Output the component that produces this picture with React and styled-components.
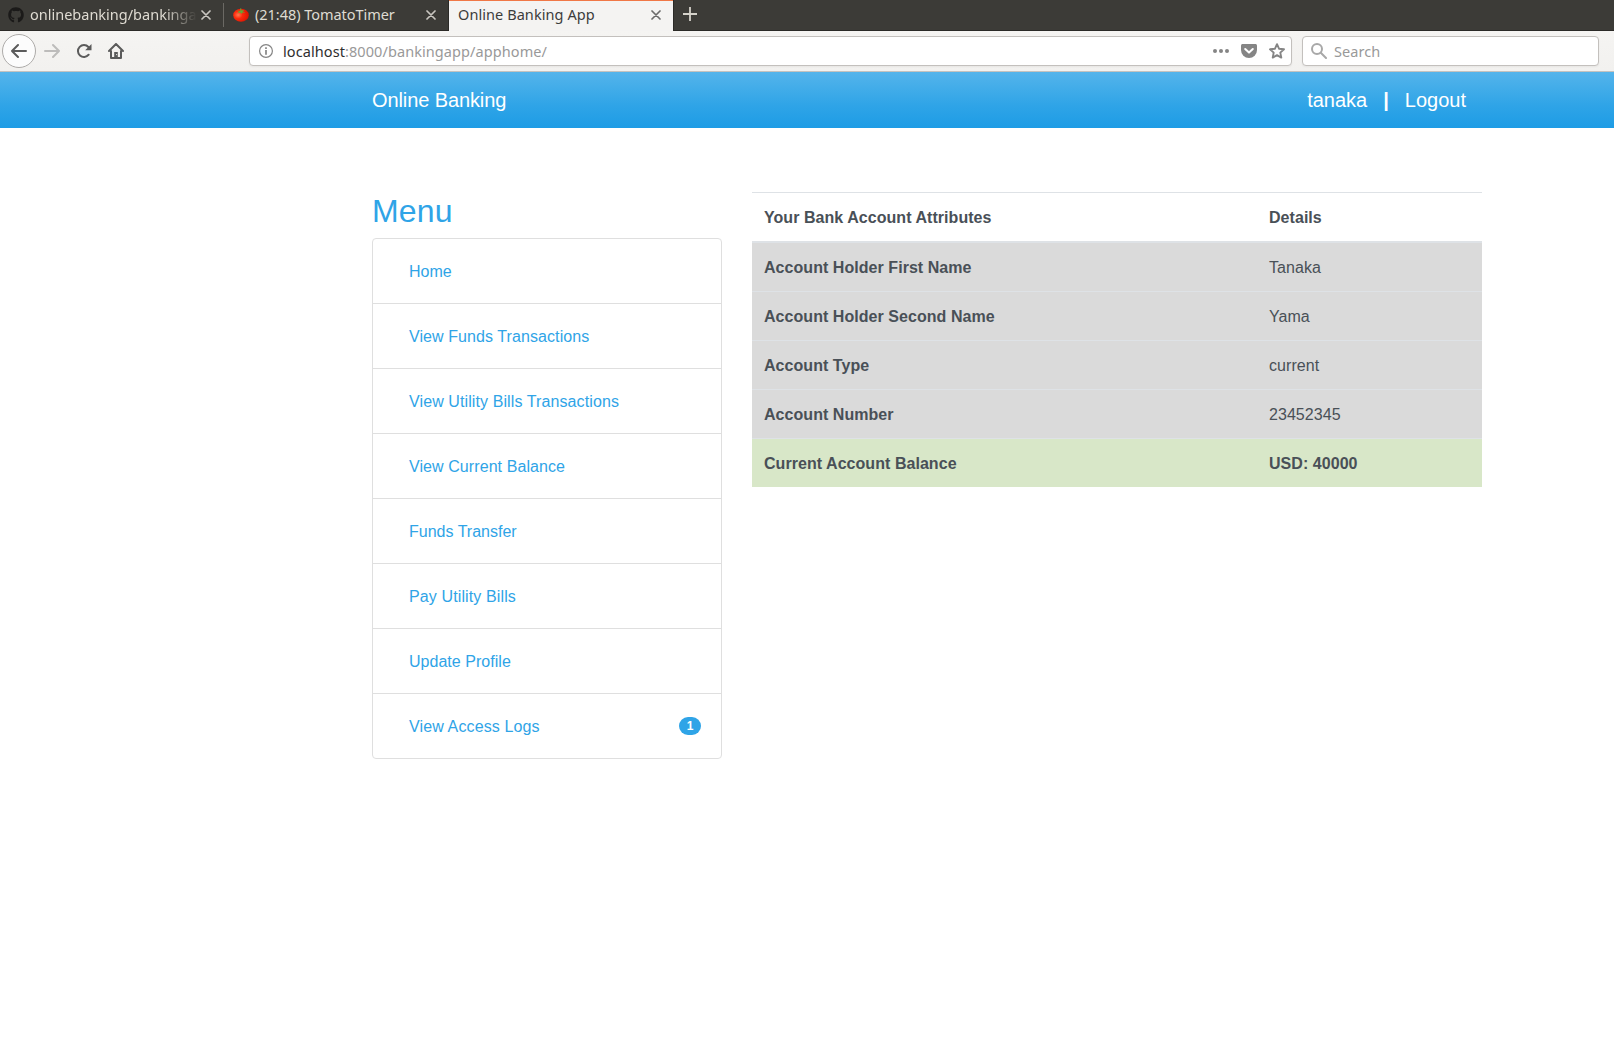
import React from "react";
import styled, { createGlobalStyle } from "styled-components";
import { FaGithub } from "react-icons/fa";

const GlobalStyle = createGlobalStyle`
  * { box-sizing: border-box; }
  body {
    margin: 0;
    background: #fff;
    color: #495057;
    font: 16px/24px "Liberation Sans", Arial, sans-serif;
  }
`;

const chromeFont = `"Noto Sans", "Open Sans", sans-serif`;

const TabBar = styled.div`
  display: flex;
  height: 31px;
  background: #3c3b37;
  border-bottom: 1px solid #2b2a27;
  font: 14.5px/28px ${chromeFont};
`;

const Tab = styled.div`
  display: flex;
  align-items: center;
  flex: none;
  width: ${(p) => p.$width}px;
  height: ${(p) => (p.$active ? 31 : 30)}px;
  padding: 0 ${(p) => p.$padRight}px 0 ${(p) => p.$padLeft}px;
  background: ${(p) => (p.$active ? "#f4f3f2" : "transparent")};
  color: ${(p) => (p.$active ? "#3c3c3c" : "#dfdbd2")};
  box-shadow: ${(p) => (p.$active ? "inset 0 1px #f07746, -1px 0 #2b2a27, 1px 0 #2b2a27" : "none")};
  padding-bottom: ${(p) => (p.$active ? 1 : 0)}px;
  svg { flex: none; display: block; }
`;

const TabTitle = styled.div`
  flex: 1;
  min-width: 0;
  height: 30px;
  margin-left: ${(p) => p.$gap || 0}px;
  white-space: nowrap;
  letter-spacing: ${(p) => p.$tracking || 0}px;
  mask-image: ${(p) => (p.$fade ? "linear-gradient(90deg, #000 134px, transparent 167px)" : "none")};
`;

const TabDivider = styled.div`
  width: 1px;
  height: 24px;
  margin-top: 3px;
  background: #6b6964;
`;

const NewTab = styled.div`
  display: flex;
  align-items: center;
  height: 28px;
  margin-left: 10px;
`;

const Toolbar = styled.div`
  display: flex;
  align-items: center;
  height: 41px;
  padding: 0 15px 0 2px;
  background: linear-gradient(#f5f4f2, #f2f1ef);
  border-bottom: 1px solid #c4c2bf;
  font: 14.5px/28px ${chromeFont};
  svg { flex: none; display: block; }
`;

const BackButton = styled.div`
  display: grid;
  place-items: center;
  width: 34px;
  height: 34px;
  border: 1px solid #adaba9;
  border-radius: 50%;
  background: #fcfcfc;
`;

const NavIcons = styled.div`
  display: flex;
  gap: 16px;
  margin-left: 8px;
  width: 205px;
`;

const Field = styled.div`
  display: flex;
  align-items: center;
  width: ${(p) => p.$width}px;
  height: 30px;
  margin-right: ${(p) => p.$after || 0}px;
  padding: 0 6px 0 ${(p) => p.$pad}px;
  border: 1px solid #c3c0bd;
  border-radius: 4px;
  background: #fff;
  color: #999;
  box-shadow: 0 1px 2px rgba(0, 0, 0, 0.05);
`;

const Address = styled.div`
  flex: 1;
  margin-left: ${(p) => p.$gap}px;
  letter-spacing: 0.08px;
  b { font-weight: 400; color: #2e2e2e; }
`;

const FieldActions = styled.div`
  display: flex;
  gap: 12px;
`;

const Header = styled.header`
  height: 56px;
  background: linear-gradient(#54b4eb, #2fa4e7 60%, #1d9ce5);
  color: #fff;
  font-size: 20px;
  line-height: 30px;
`;

const Container = styled.div`
  display: flex;
  width: 1110px;
  margin-left: 372px;
`;

const HeaderInner = styled(Container)`
  align-items: center;
  justify-content: space-between;
  height: 56px;
`;

const Brand = styled.span`
  letter-spacing: -0.1px;
`;

const UserNav = styled.nav`
  display: flex;
  gap: 16px;
  padding-right: 16px;
`;

const Content = styled(Container)`
  align-items: flex-start;
  gap: 30px;
  padding-top: 64px;
`;

const Sidebar = styled.aside`
  width: 350px;
`;

const MenuTitle = styled.h2`
  margin: 0 0 8px;
  color: #2fa4e7;
  font-size: 32px;
  font-weight: 400;
  line-height: 38px;
  letter-spacing: 0.2px;
`;

const MenuList = styled.ul`
  margin: 0;
  padding: 0;
  list-style: none;
  border: 1px solid #dfdfdf;
  border-radius: 4px;
`;

const MenuItem = styled.li`
  display: flex;
  align-items: center;
  justify-content: space-between;
  height: 65px;
  padding: 0 20px 0 36px;
  border-bottom: 1px solid #dfdfdf;
  color: #2fa4e7;
  &:last-child { height: 64px; border-bottom: 0; }
`;

const MenuLabel = styled.span`
  padding-top: 2px;
  letter-spacing: ${(p) => p.$tracking || 0}px;
`;

const Badge = styled.span`
  padding: 3px 7.7px;
  border-radius: 160px;
  background: #2fa4e7;
  color: #fff;
  font-size: 12px;
  font-weight: 700;
  line-height: 12px;
`;

const AccountTable = styled.table`
  width: 730px;
  table-layout: fixed;
  border-spacing: 0;
  text-align: left;
  letter-spacing: 0.05px;
`;

const HeadCell = styled.th`
  width: ${(p) => p.$width || "auto"};
  padding: 13px 12px 11px;
  border-top: 1px solid #dee2e6;
  border-bottom: 2px solid #dee2e6;
`;

const Row = styled.tr`
  background: ${(p) => (p.$total ? "#d8e7c8" : "#dadada")};
  th, td {
    padding: 13px 12px 11px;
    border-top: 1px solid #dee2e6;
  }
  td { font-weight: ${(p) => (p.$total ? 700 : 400)}; }
  &:first-child th, &:first-child td { border-top: 0; }
`;

const menu = [
  { label: "Home" },
  { label: "View Funds Transactions", tracking: 0.08 },
  { label: "View Utility Bills Transactions", tracking: 0.1 },
  { label: "View Current Balance", tracking: 0.08 },
  { label: "Funds Transfer" },
  { label: "Pay Utility Bills", tracking: 0.12 },
  { label: "Update Profile", tracking: 0.03 },
  { label: "View Access Logs", tracking: 0.13, count: 1 },
];

const attributes = [
  { name: "Account Holder First Name", value: "Tanaka" },
  { name: "Account Holder Second Name", value: "Yama" },
  { name: "Account Type", value: "current" },
  { name: "Account Number", value: "23452345" },
  { name: "Current Account Balance", value: "USD: 40000", total: true },
];

const CloseIcon = ({ color = "#c9c6c0" }) => (
  <svg width="10" height="10" viewBox="0 0 10 10" stroke={color} strokeWidth="1.7" strokeLinecap="round">
    <path d="M1 1l8 8M9 1L1 9" />
  </svg>
);

const TomatoIcon = () => (
  <svg width="16" height="16" viewBox="0 0 16 16">
    <defs>
      <radialGradient id="tomato" cx=".32" cy=".48" r=".7">
        <stop offset="0" stopColor="#ff7a50" />
        <stop offset=".4" stopColor="#fb2a0c" />
        <stop offset="1" stopColor="#d81200" />
      </radialGradient>
    </defs>
    <ellipse cx="8" cy="8.2" rx="7.8" ry="6.5" fill="url(#tomato)" />
    <path d="M7.4 4L7 1.6l1.2-.2.3 2.2 2.8-.7-1.6 1.5 2.8 1.3-3.3-.2L8.6 7 7.3 5.5 4.4 6.2l1.8-1.5-2.5-1.1z" fill="#5fa936" />
  </svg>
);

const ArrowIcon = ({ color, flip }) => (
  <svg width="16" height="16" viewBox="0 0 16 16" fill="none" stroke={color} strokeWidth="2" strokeLinecap="round" strokeLinejoin="round">
    <path d={flip ? "M1 8h14M9 2l6 6-6 6" : "M15 8H1M7 2L1 8l6 6"} />
  </svg>
);

const ReloadIcon = () => (
  <svg width="16" height="16" viewBox="0 0 16 16" fill="none" stroke="#5b5b5b" strokeWidth="2" strokeLinecap="round">
    <path d="M12.7 11.7A6 6 0 1 1 12.4 4" />
    <path d="M15.5 1v6.3H9.2z" fill="#5b5b5b" stroke="none" />
  </svg>
);

const HomeIcon = () => (
  <svg width="16" height="16" viewBox="0 0 16 16" fill="none" stroke="#5b5b5b" strokeWidth="2" strokeLinecap="round" strokeLinejoin="round">
    <path d="M1 8l7-7 7 7M3 8v7h10V8" />
    <path d="M6.2 9h3.6v6H6.2z" fill="#5b5b5b" stroke="none" />
    <path d="M8.5 11.6h.2" stroke="#f4f3f2" strokeWidth="1" />
  </svg>
);

const InfoIcon = () => (
  <svg width="14" height="14" viewBox="0 0 14 14" fill="none" stroke="#858585">
    <circle cx="7" cy="7" r="6.4" strokeWidth="1.2" />
    <path d="M7 6v4.8M7 3.2v1.7" strokeWidth="1.7" />
  </svg>
);

const DotsIcon = () => (
  <svg width="16" height="16" viewBox="0 0 16 16" fill="#858585">
    <circle cx="2" cy="8" r="2" /><circle cx="8" cy="8" r="2" /><circle cx="14" cy="8" r="2" />
  </svg>
);

const PocketIcon = () => (
  <svg width="16" height="16" viewBox="0 0 16 16">
    <path d="M1.7 1h12.6C15.3 1 16 1.7 16 2.7V7a8 8 0 0 1-16 0V2.7C0 1.7.7 1 1.7 1z" fill="#858585" />
    <path d="M4.2 6L8 9.6 11.8 6" fill="none" stroke="#fff" strokeWidth="2" strokeLinecap="round" strokeLinejoin="round" />
  </svg>
);

const StarIcon = () => (
  <svg width="16" height="16" viewBox="0 0 16 16" fill="none" stroke="#858585" strokeWidth="1.9" strokeLinejoin="round">
    <path d="M8 1.2l2 4.5 5 .6-3.7 3.3 1 5L8 12.1l-4.3 2.5 1-5L1 6.3l5-.6z" />
  </svg>
);

const SearchIcon = () => (
  <svg width="16" height="16" viewBox="0 0 16 16" fill="none" stroke="#a8a8a8" strokeWidth="2" strokeLinecap="round">
    <circle cx="6" cy="6" r="5" /><path d="M9.8 9.8L15 15" />
  </svg>
);

export default function App() {
  return (
    <>
      <GlobalStyle />
      <TabBar>
        <Tab $width={223} $padLeft={8} $padRight={12}>
          <FaGithub size={16} color="#1b1a19" />
          <TabTitle $gap={6} $fade>onlinebanking/bankinga</TabTitle>
          <CloseIcon />
        </Tab>
        <TabDivider />
        <Tab $width={225} $padLeft={9} $padRight={13}>
          <TomatoIcon />
          <TabTitle $gap={6} $tracking={-0.04}>(21:48) TomatoTimer</TabTitle>
          <CloseIcon />
        </Tab>
        <Tab $active $width={224} $padLeft={9} $padRight={12}>
          <TabTitle $tracking={0.07}>Online Banking App</TabTitle>
          <CloseIcon color="#6b6b6b" />
        </Tab>
        <NewTab>
          <svg width="14" height="14" viewBox="0 0 14 14" stroke="#d5d2ca" strokeWidth="1.8">
            <path d="M7 0v14M0 7h14" />
          </svg>
        </NewTab>
      </TabBar>
      <Toolbar>
        <BackButton><ArrowIcon color="#5b5b5b" /></BackButton>
        <NavIcons>
          <ArrowIcon color="#bdbcbb" flip />
          <ReloadIcon />
          <HomeIcon />
        </NavIcons>
        <Field $width={1043} $after={10} $pad={9}>
          <InfoIcon />
          <Address $gap={10}><b>localhost</b>:8000/bankingapp/apphome/</Address>
          <FieldActions>
            <DotsIcon />
            <PocketIcon />
            <StarIcon />
          </FieldActions>
        </Field>
        <Field $width={297} $pad={8}>
          <SearchIcon />
          <Address $gap={7}>Search</Address>
        </Field>
      </Toolbar>
      <Header>
        <HeaderInner>
          <Brand>Online Banking</Brand>
          <UserNav>
            <span>tanaka</span>
            <b>|</b>
            <span>Logout</span>
          </UserNav>
        </HeaderInner>
      </Header>
      <Content>
        <Sidebar>
          <MenuTitle>Menu</MenuTitle>
          <MenuList>
            {menu.map(({ label, tracking, count }) => (
              <MenuItem key={label}>
                <MenuLabel $tracking={tracking}>{label}</MenuLabel>
                {count && <Badge>{count}</Badge>}
              </MenuItem>
            ))}
          </MenuList>
        </Sidebar>
        <AccountTable>
          <thead>
            <tr>
              <HeadCell $width="505px">Your Bank Account Attributes</HeadCell>
              <HeadCell>Details</HeadCell>
            </tr>
          </thead>
          <tbody>
            {attributes.map(({ name, value, total }) => (
              <Row key={name} $total={total}>
                <th>{name}</th>
                <td>{value}</td>
              </Row>
            ))}
          </tbody>
        </AccountTable>
      </Content>
    </>
  );
}
